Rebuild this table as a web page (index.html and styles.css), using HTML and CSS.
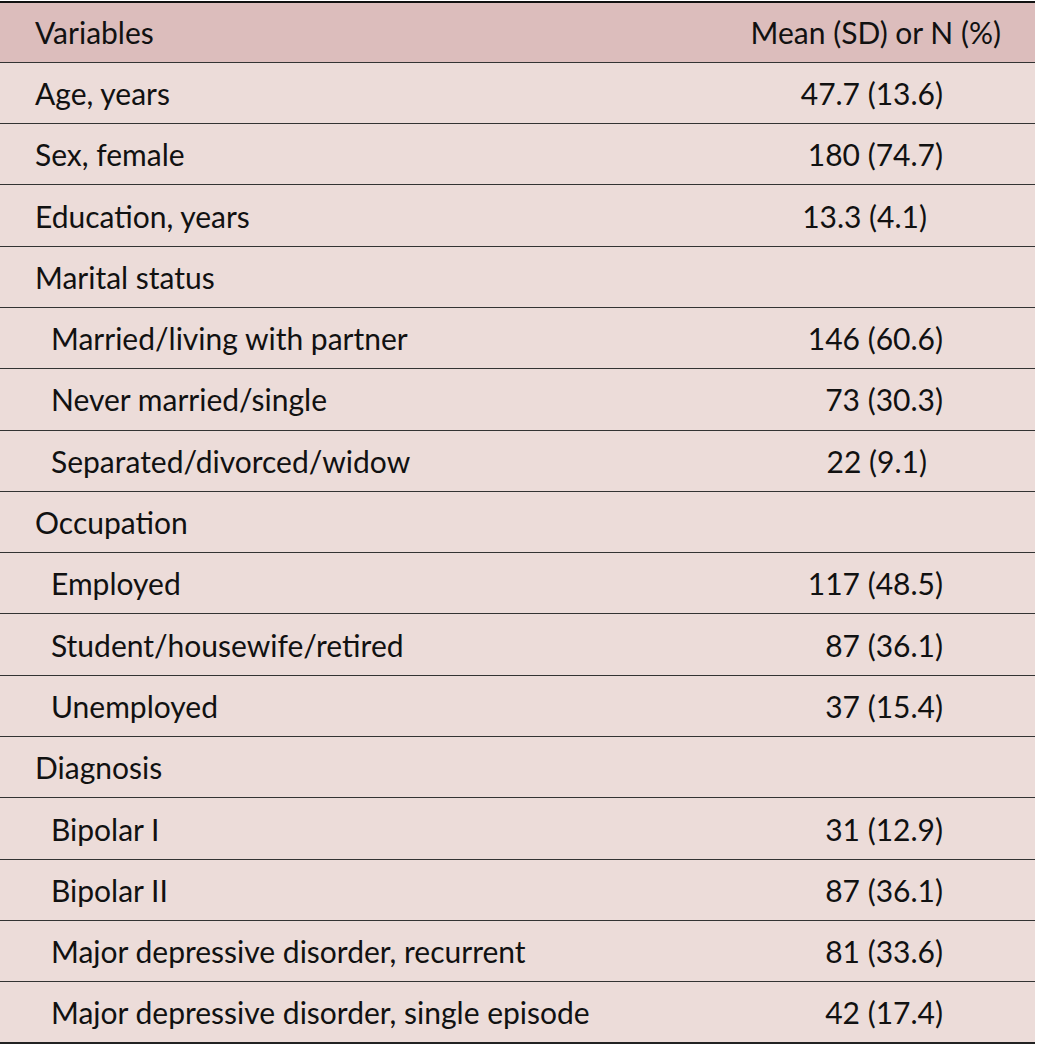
FILE: index.html
```html
<!DOCTYPE html>
<html lang="en">
<head>
<meta charset="utf-8">
<title>Table</title>
<link rel="stylesheet" href="styles.css">
</head>
<body>
<table class="data">
  <thead>
    <tr><th class="var">Variables</th><th class="val">Mean (SD) or N (%)</th></tr>
  </thead>
  <tbody>
    <tr><td class="var">Age, years</td><td class="val">47.7 (13.6)</td></tr>
    <tr><td class="var">Sex, female</td><td class="val">180 (74.7)</td></tr>
    <tr><td class="var">Education, years</td><td class="val short">13.3 (4.1)</td></tr>
    <tr><td class="var">Marital status</td><td class="val"></td></tr>
    <tr><td class="var sub">Married/living with partner</td><td class="val">146 (60.6)</td></tr>
    <tr><td class="var sub">Never married/single</td><td class="val">73 (30.3)</td></tr>
    <tr><td class="var sub">Separated/divorced/widow</td><td class="val short">22 (9.1)</td></tr>
    <tr><td class="var">Occupation</td><td class="val"></td></tr>
    <tr><td class="var sub">Employed</td><td class="val">117 (48.5)</td></tr>
    <tr><td class="var sub">Student/housewife/retired</td><td class="val">87 (36.1)</td></tr>
    <tr><td class="var sub">Unemployed</td><td class="val">37 (15.4)</td></tr>
    <tr><td class="var">Diagnosis</td><td class="val"></td></tr>
    <tr><td class="var sub">Bipolar I</td><td class="val">31 (12.9)</td></tr>
    <tr><td class="var sub">Bipolar II</td><td class="val">87 (36.1)</td></tr>
    <tr><td class="var sub">Major depressive disorder, recurrent</td><td class="val">81 (33.6)</td></tr>
    <tr><td class="var sub">Major depressive disorder, single episode</td><td class="val">42 (17.4)</td></tr>
  </tbody>
</table>
</body>
</html>
```
FILE: styles.css
```css
html, body {
  margin: 0;
  padding: 0;
  background: #ffffff;
}
body {
  padding-top: 1px;
}
.data {
  width: 1035px;
  border-collapse: collapse;
  font-family: Lato, "Liberation Sans", sans-serif;
  font-size: 30px;
  color: #111111;
  border-top: 2px solid #111111;
  border-bottom: 2px solid #222222;
}
.data th,
.data td {
  height: 61.3px;
  padding: 0;
  font-weight: normal;
  vertical-align: middle;
  border-bottom: 1px solid #333333;
  box-sizing: border-box;
}
.data thead th {
  height: 60.3px;
  background: #dcbdbc;
}
.data tbody td {
  background: #ecdcd9;
}
.var {
  text-align: left;
  padding-left: 35px !important;
}
.var.sub {
  padding-left: 51px !important;
}
th.val {
  text-align: right;
  padding-right: 34px !important;
}
td.val {
  text-align: right;
  padding-right: 92px !important;
}
td.val.short {
  padding-right: 108px !important;
}
```
